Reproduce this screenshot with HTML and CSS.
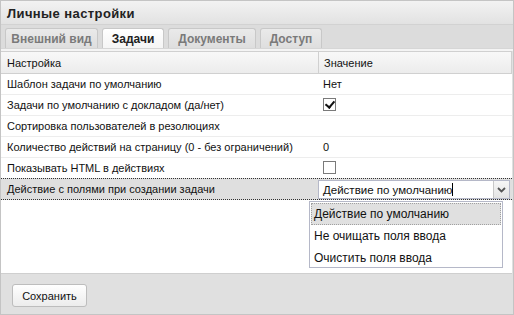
FILE: index.html
```html
<!DOCTYPE html>
<html lang="ru">
<head>
    <meta charset="UTF-8">
    <title>Личные настройки</title>
    <link rel="stylesheet" href="styles.css">
</head>
<body>
    <div class="panel">
        <div class="panel-header">Личные настройки</div>
        <div class="tabs">
            <div class="tab">Внешний вид</div>
            <div class="tab active">Задачи</div>
            <div class="tab">Документы</div>
            <div class="tab">Доступ</div>
        </div>
        <div class="tab-line"></div>
        <div class="grid">
            <div class="grid-head">
                <div class="cell name">Настройка</div>
                <div class="cell value">Значение</div>
            </div>
            <div class="row">
                <div class="cell name">Шаблон задачи по умолчанию</div>
                <div class="cell value">Нет</div>
            </div>
            <div class="row">
                <div class="cell name">Задачи по умолчанию с докладом (да/нет)</div>
                <div class="cell value"><span class="check checked"></span></div>
            </div>
            <div class="row">
                <div class="cell name">Сортировка пользователей в резолюциях</div>
                <div class="cell value"></div>
            </div>
            <div class="row">
                <div class="cell name">Количество действий на страницу (0 - без ограничений)</div>
                <div class="cell value">0</div>
            </div>
            <div class="row">
                <div class="cell name">Показывать HTML в действиях</div>
                <div class="cell value"><span class="check"></span></div>
            </div>
            <div class="row selected">
                <div class="cell name">Действие с полями при создании задачи</div>
                <div class="cell value">
                    <div class="combo">
                        <div class="combo-input">Действие по умолчанию<span class="caret"></span></div>
                        <div class="combo-trigger">
                            <svg width="9" height="6" viewBox="0 0 9 6"><path d="M1 1 L4.5 4.5 L8 1" fill="none" stroke="#555" stroke-width="1.8"/></svg>
                        </div>
                    </div>
                </div>
            </div>
            <div class="combo-list">
                <div class="combo-item hover">Действие по умолчанию</div>
                <div class="combo-item">Не очищать поля ввода</div>
                <div class="combo-item">Очистить поля ввода</div>
            </div>
        </div>
        <div class="footer">
            <button type="button">Сохранить</button>
        </div>
    </div>
</body>
</html>
```

FILE: styles.css
```css
* {
    margin: 0;
    padding: 0;
    box-sizing: border-box;
}

body {
    font-family: "Liberation Sans", Arial, sans-serif;
    font-size: 11px;
    color: #111;
    background: #ffffff;
}

.panel {
    width: 514px;
    height: 315px;
    border: 1px solid #c4c4c4;
    background: #e0e0e0;
    display: flex;
    flex-direction: column;
}

.panel-header {
    height: 24px;
    padding: 5px 0 0 6px;
    font-size: 13px;
    letter-spacing: 0.4px;
    font-weight: bold;
    color: #222;
    background: linear-gradient(#f2f2f2, #e2e2e2);
    border-bottom: 1px solid #d2d2d2;
}

.tabs {
    height: 23px;
    display: flex;
    gap: 4px;
    padding: 3px 0 0 4px;
    background: #dcdcdc;
}

.tab {
    height: 20px;
    padding: 3px 0 0;
    text-align: center;
    font-size: 12px;
    font-weight: bold;
    color: #7a7a7a;
    border: 1px solid #c8c8c8;
    border-bottom: none;
    border-radius: 3px 3px 0 0;
    background: linear-gradient(#eaeaea, #dedede);
}

.tab:nth-child(1) { width: 93px; }
.tab:nth-child(2) { width: 62px; }
.tab:nth-child(3) { width: 88px; }
.tab:nth-child(4) { width: 62px; }

.tab.active {
    color: #222;
    height: 21px;
    background: linear-gradient(#ffffff, #f4f4f4);
}

.tab-line {
    height: 3px;
    background: #f4f4f4;
    border-top: 1px solid #d6d6d6;
}

.grid {
    position: relative;
    flex: 1;
    background: #ffffff;
    border-bottom: 1px solid #cfcfcf;
    margin-right: 1px;
}

.grid-head {
    display: flex;
    height: 23px;
    border: 1px solid #d0d0d0;
    border-left: none;
    background: linear-gradient(#f8f8f8, #ececec);
}

.grid-head .cell {
    padding-top: 5px;
}

.grid-head .value {
    border-left: 1px solid #d0d0d0;
}

.row {
    display: flex;
    height: 21px;
    border-bottom: 1px solid #ededed;
}

.cell {
    padding: 4px 0 0 6px;
    white-space: nowrap;
}

.cell.name {
    width: 317px;
}

.cell.value {
    flex: 1;
    padding-left: 5px;
}

.check {
    display: inline-block;
    width: 13px;
    height: 13px;
    margin-top: -1px;
    border: 1px solid #7a7a7a;
    background: #fff;
    position: relative;
}

.check.checked::after {
    content: '';
    position: absolute;
    left: 3px;
    top: 0;
    width: 4px;
    height: 7px;
    border: solid #111;
    border-width: 0 2px 2px 0;
    transform: rotate(40deg);
}

.row.selected {
    height: 22px;
    background: #dfdfdf;
    border-top: 1px dotted #333;
    border-bottom: 1px dotted #333;
    margin-top: -1px;
}

.row.selected .cell.value {
    padding: 1px 0 0 0;
}

.combo {
    display: flex;
    width: 192px;
    height: 19px;
    border: 1px solid #b5b8c8;
    background: #fff;
}

.combo-input {
    flex: 1;
    padding: 2px 0 0 4px;
    font-size: 11.5px;
}

.caret {
    display: inline-block;
    width: 1px;
    height: 13px;
    background: #000;
    vertical-align: -2px;
}

.combo-trigger {
    width: 16px;
    display: flex;
    align-items: center;
    justify-content: center;
    border-left: 1px solid #c8c8c8;
    background: linear-gradient(#f6f6f6, #e4e4e4);
}

.combo-list {
    position: absolute;
    left: 308px;
    top: 150px;
    width: 194px;
    height: 67px;
    background: #fff;
    border: 1px solid #b5b8c8;
    padding: 1px;
}

.combo-item {
    height: 22px;
    padding: 4px 0 0 3px;
    font-size: 12px;
}

.combo-item.hover {
    background: #e0e0e0;
    border: 1px dotted #a0a0a0;
    padding: 3px 0 0 2px;
}

.footer {
    height: 40px;
    padding: 10px 0 0 11px;
}

button {
    width: 75px;
    height: 23px;
    font-family: "Liberation Sans", Arial, sans-serif;
    font-size: 11px;
    color: #111;
    border: 1px solid #bdbdbd;
    border-radius: 3px;
    background: linear-gradient(#ffffff, #ececec);
}
```
